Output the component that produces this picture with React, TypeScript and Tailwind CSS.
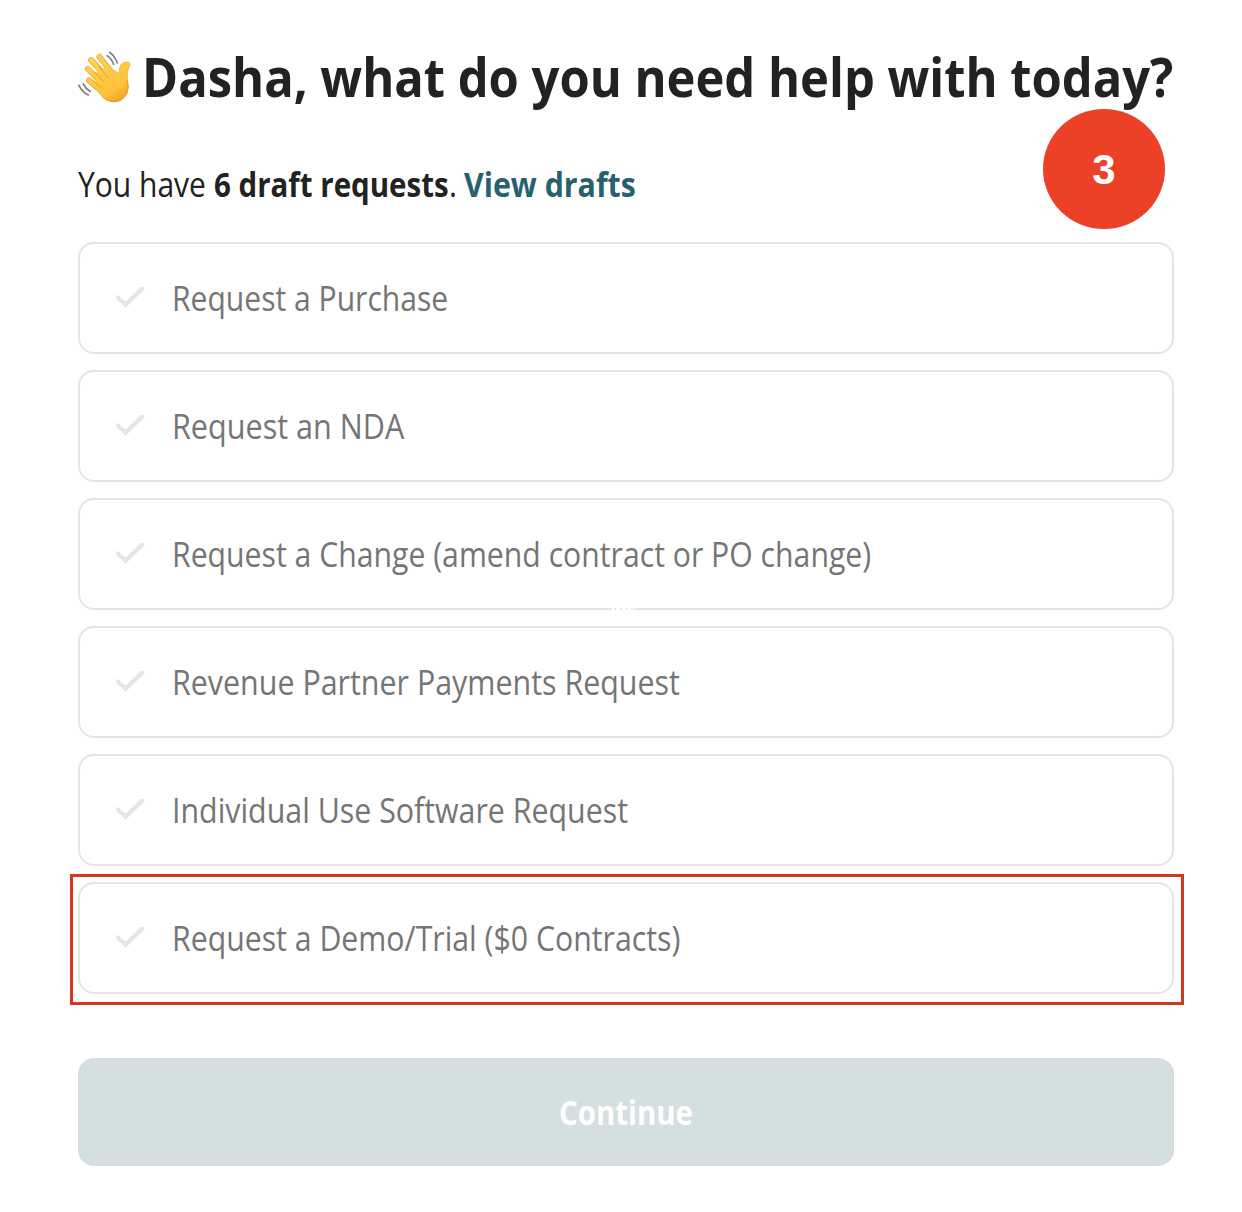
import { useLayoutEffect, useRef, useState, type ReactNode } from "react";

const options = [
  { label: "Request a Purchase", width: 276 },
  { label: "Request an NDA", width: 232 },
  { label: "Request a Change (amend contract or PO change)", width: 699 },
  { label: "Revenue Partner Payments Request", width: 508 },
  { label: "Individual Use Software Request", width: 456 },
  { label: "Request a Demo/Trial ($0 Contracts)", width: 508 },
];

/* Condenses a line of text so that it fills exactly the given width. */
function Fit({ width, className = "", children }: { width: number; className?: string; children: ReactNode }) {
  const ref = useRef<HTMLSpanElement>(null);
  const [scale, setScale] = useState(1);
  useLayoutEffect(() => {
    if (ref.current) setScale(width / ref.current.offsetWidth);
  }, [width]);
  return (
    <span className={`flex shrink-0 ${className}`} style={{ width }}>
      <span ref={ref} className="shrink-0 origin-left whitespace-nowrap" style={{ transform: `scaleX(${scale})` }}>
        {children}
      </span>
    </span>
  );
}

function WavingHand() {
  return (
    <svg viewBox="20 30 165 160" className="-ml-[1px] h-[53.33px] w-[55px] shrink-0" fill="none" strokeLinecap="round" strokeLinejoin="round">
      <defs>
        <linearGradient id="skin" x1="60" y1="45" x2="150" y2="185" gradientUnits="userSpaceOnUse">
          <stop stopColor="#ffd453" />
          <stop offset=".75" stopColor="#fdc23b" />
          <stop offset="1" stopColor="#f0a02a" />
        </linearGradient>
      </defs>
      <g stroke="#e49a23" strokeWidth="17">
        <path d="M87 50L121 94M62 60L106 108M52 86L96 130M56 121L94 154" />
      </g>
      <path d="M80 98L116 77Q137 99 146 98Q149 94 147 86Q150 67 170 66Q181 66 178 77Q170 91 171 119Q178 143 169 162Q157 185 128 186Q108 184 92 166L76 144Z" fill="url(#skin)" stroke="#e49a23" strokeWidth="1.5" />
      <g stroke="url(#skin)" strokeWidth="13.5">
        <path d="M87 50L124 100M62 60L108 112M52 86L98 132M56 121L96 155" />
      </g>
      <path d="M86 79L113 113M75 97L100 125M67 120L92 144" stroke="#df9420" strokeWidth="2.5" />
      <path d="M171 120Q178 143 169 162Q157 185 128 185Q108 183 95 169" stroke="#e49320" strokeWidth="3" opacity=".75" />
      <g stroke="#7c7c7c" strokeWidth="5">
        <path d="M118 37Q134 48 141 69M110 47Q124 56 130 73M26 136Q35 156 54 165M39 131Q45 146 60 154" />
      </g>
    </svg>
  );
}

function Check() {
  return (
    <svg viewBox="0 0 30 22" className="-mt-[2px] h-[22px] w-[30px] shrink-0" fill="none" stroke="#e5e5e5" strokeWidth="4.4" strokeLinecap="round" strokeLinejoin="miter">
      <path d="M3 11.6L10.6 18.8L27 3" />
    </svg>
  );
}

function Option({ label, width }: { label: string; width: number }) {
  return (
    <button className="flex h-28 w-full items-center rounded-[16px] border-2 border-[#e5e5e5] bg-white pl-[35px] text-left">
      <Check />
      <Fit width={width} className="ml-[26.5px] text-[34px] leading-10 text-[#757575]">{label}</Fit>
    </button>
  );
}

export default function App() {
  return (
    <main className="relative h-[1212px] w-[1242px] overflow-hidden bg-white pl-[78px] pr-[68px] pt-[42px] font-['Open_Sans','Noto_Sans',sans-serif] text-[#222]">
      <header className="flex h-[70px] items-center">
        <WavingHand />
        <h1 className="-mt-[2px] ml-[10px] text-[54px] font-bold leading-[70px]">
          <Fit width={1031}>Dasha, what do you need help with today?</Fit>
        </h1>
      </header>
      <div className="mt-[49px] flex h-[46px] text-[34px] leading-[46px]">
        <Fit width={128}>You have</Fit>
        <Fit width={235} className="ml-[8px] font-bold">6 draft requests</Fit>
        <Fit width={8}>.</Fit>
        <a className="ml-[7px] font-bold text-[#27606f]"><Fit width={172}>View drafts</Fit></a>
      </div>
      <div className="mt-[35px] flex flex-col gap-4">
        {options.map((o) => <Option key={o.label} {...o} />)}
      </div>
      <button className="mt-16 flex h-[108px] w-full items-center justify-center rounded-[16px] bg-[#d4dfe0] text-[34px] font-bold text-white">
        <Fit width={134}>Continue</Fit>
      </button>
      <div className="absolute left-[1043px] top-[109px] flex h-[120px] w-[122px] items-center justify-center rounded-[50%] bg-[#ec4027] font-['Liberation_Sans',sans-serif] text-[42px] font-bold text-white">3</div>
      <div className="pointer-events-none absolute left-[70px] top-[874px] h-[131px] w-[1114px] border-[3px] border-[#d43720]" />
      <div className="absolute left-[612px] top-[608px] flex h-[2px] w-[22px] gap-[2px]">
        <i className="w-[2px] bg-white" /><i className="w-[4px] bg-white" /><i className="w-[5px] bg-white" /><i className="w-[3px] bg-white" /><i className="w-[1px] bg-white" />
      </div>
    </main>
  );
}
